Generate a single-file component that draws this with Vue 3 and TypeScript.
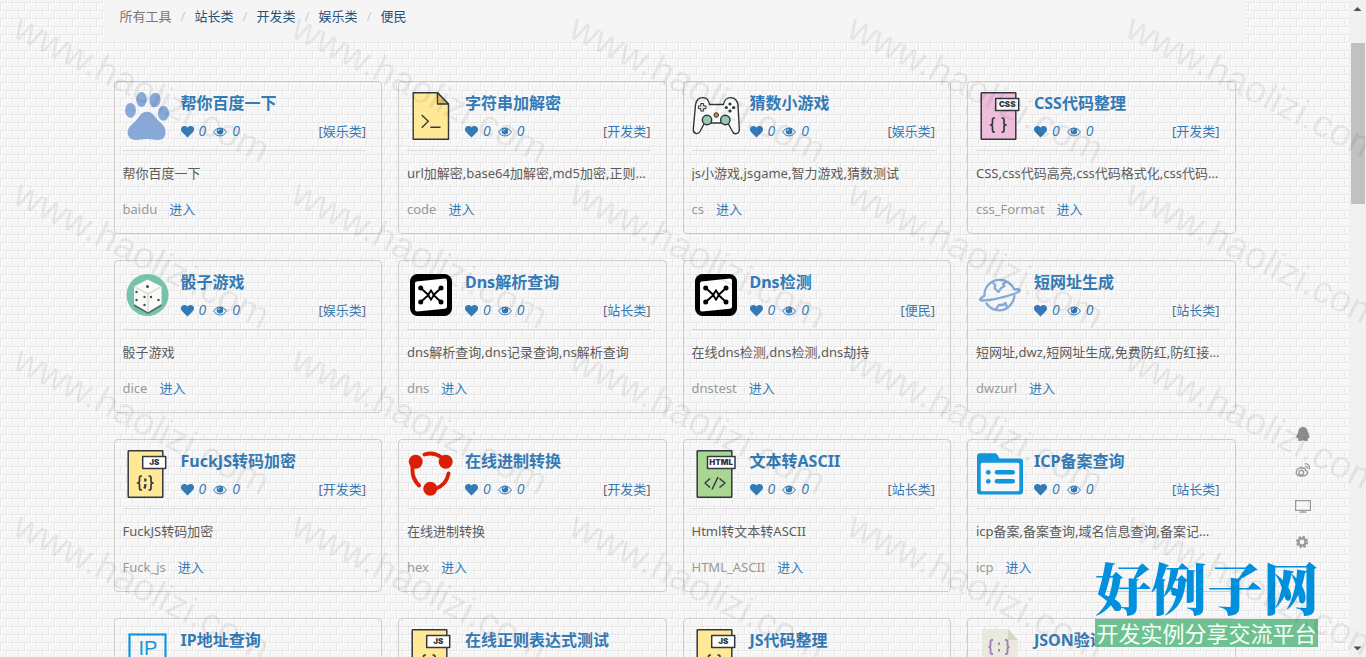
<script setup lang="ts">
interface Tool {
  title: string
  kind: string
  desc: string
  slug: string
  icon: string
}

const categories: string[] = ['站长类', '开发类', '娱乐类', '便民']

const tools: Tool[] = [
  { title: '帮你百度一下', kind: '娱乐类', desc: '帮你百度一下', slug: 'baidu', icon: 'paw' },
  { title: '字符串加解密', kind: '开发类', desc: 'url加解密,base64加解密,md5加密,正则表达式', slug: 'code', icon: 'shell' },
  { title: '猜数小游戏', kind: '娱乐类', desc: 'js小游戏,jsgame,智力游戏,猜数测试', slug: 'cs', icon: 'pad' },
  { title: 'CSS代码整理', kind: '开发类', desc: 'CSS,css代码高亮,css代码格式化,css代码整理', slug: 'css_Format', icon: 'css' },
  { title: '骰子游戏', kind: '娱乐类', desc: '骰子游戏', slug: 'dice', icon: 'dice' },
  { title: 'Dns解析查询', kind: '站长类', desc: 'dns解析查询,dns记录查询,ns解析查询', slug: 'dns', icon: 'dns' },
  { title: 'Dns检测', kind: '便民', desc: '在线dns检测,dns检测,dns劫持', slug: 'dnstest', icon: 'dns' },
  { title: '短网址生成', kind: '站长类', desc: '短网址,dwz,短网址生成,免费防红,防红接口生成', slug: 'dwzurl', icon: 'planet' },
  { title: 'FuckJS转码加密', kind: '开发类', desc: 'FuckJS转码加密', slug: 'Fuck_js', icon: 'js' },
  { title: '在线进制转换', kind: '开发类', desc: '在线进制转换', slug: 'hex', icon: 'share' },
  { title: '文本转ASCII', kind: '站长类', desc: 'Html转文本转ASCII', slug: 'HTML_ASCII', icon: 'html' },
  { title: 'ICP备案查询', kind: '站长类', desc: 'icp备案,备案查询,域名信息查询,备案记录查询', slug: 'icp', icon: 'folder' },
  { title: 'IP地址查询', kind: '站长类', desc: 'IP地址查询', slug: 'ip', icon: 'ip' },
  { title: '在线正则表达式测试', kind: '开发类', desc: '在线正则表达式测试', slug: 'regex', icon: 'js' },
  { title: 'JS代码整理', kind: '开发类', desc: 'JS代码整理', slug: 'js_Format', icon: 'js' },
  { title: 'JSON验证', kind: '开发类', desc: 'JSON验证', slug: 'json', icon: 'json' },
]

const marks: { x: number; y: number }[] = []
for (let row = 0; row < 4; row++) {
  for (let col = 0; col < 5; col++) marks.push({ x: 11 + col * 278, y: 36 + row * 166 })
}
</script>

<template>
  <div class="page">
    <main class="container">
      <nav class="crumbs" aria-label="工具分类">
        <span class="current">所有工具</span>
        <template v-for="c in categories" :key="c">
          <span class="slash">/</span><a href="#">{{ c }}</a>
        </template>
      </nav>

      <section class="grid">
        <article v-for="t in tools" :key="t.slug" class="card">
          <header class="head">
            <svg class="icon" viewBox="0 0 48 48" aria-hidden="true">
              <g v-if="t.icon === 'paw'" fill="#88a8d8">
                <ellipse cx="18.500" cy="7.500" rx="5.300" ry="7.500" />
                <ellipse cx="32" cy="8" rx="5.500" ry="7.300" transform="rotate(10 32 8)" />
                <ellipse cx="7.500" cy="18.300" rx="5.400" ry="7.400" />
                <ellipse cx="40.500" cy="21.300" rx="5.600" ry="7.400" />
                <path d="M24 19.700C17.500 19.700 16 26 11 30.500C6 35 4.700 37 4.700 40.500C4.700 45 8 48 12.500 48C17 48 20 47 24 47C28 47 31 48 35 48C39.500 48 42.500 45 42.500 40.500C42.500 37 42 34.500 37.500 30.500C32 26 30.500 19.700 24 19.700Z" />
              </g>
              <g v-else-if="t.icon === 'shell'" stroke="#333840" stroke-width="1.4" stroke-linejoin="round" fill="none">
                <path d="M6.200 .7H30.500L41.500 12V47.300H6.200Z" fill="#ffe997" />
                <path d="M30.500 .7V12H41.500Z" fill="#e5bf5a" />
                <path d="M14.700 23L21.300 29.300L14.700 35.700M23.300 35.200H33.500" />
              </g>
              <g v-else-if="t.icon === 'pad'" stroke="#30343a" stroke-width="1.4" fill="none" stroke-linejoin="round">
                <path d="M17.500 12.500H31.500C33 3 44.500 3.500 46 13L47.300 37C47.300 42.500 42 43 40.500 39.500L36 31H12.500L8 39.500C6 43 1 42 1.300 37L3.500 13C5 3.500 16 3 17.500 12.500Z" fill="#f9fbfa" />
                <path d="M8.800 11.500h2.800v2.400h2.400v2.800h-2.400v2.400H8.800v-2.400H6.400v-2.800h2.400Z" fill="#ddd" stroke-width="1" />
                <g fill="#30343a" stroke="none"><circle cx="38" cy="12" r="1.600" /><circle cx="34.300" cy="15.500" r="1.600" /><circle cx="41.600" cy="15.500" r="1.600" /><circle cx="38" cy="19" r="1.600" /></g>
                <circle cx="15" cy="28" r="4.700" fill="#9cc9ae" /><circle cx="33.300" cy="28" r="4.700" fill="#9cc9ae" />
                <circle cx="24.200" cy="23" r="2.300" fill="#c98d1d" stroke-width="1" />
              </g>
              <g v-else-if="t.icon === 'css' || t.icon === 'js' || t.icon === 'html'" stroke="#333840" stroke-width="1.500" fill="none" stroke-linejoin="round">
                <rect x="5.200" y=".8" width="34.600" height="46.400" rx=".5" :fill="t.icon === 'css' ? '#edbdda' : t.icon === 'js' ? '#ffe997' : '#aad694'" />
                <rect :x="t.icon === 'html' ? 15.500 : 19.700" y="6.500" :width="t.icon === 'html' ? 27.500 : 23" height="12" fill="#fff" />
                <text :x="t.icon === 'html' ? 29.200 : 31.200" y="15.300" class="tag">{{ t.icon.toUpperCase() }}</text>
                <path v-if="t.icon === 'html'" d="M18 28.500L13 33L18 37.500M27.500 28.500L33 33L27.500 37.500M26 27L20 39.500" />
                <path v-else d="M19 26H18Q16.500 26 16.500 28V31Q16.500 33 14.500 33Q16.500 33 16.500 35V38Q16.500 40 18 40H19M25.500 26H26.500Q28 26 28 28V31Q28 33 30 33Q28 33 28 35V38Q28 40 26.500 40H25.500" stroke-width="1.700" />
                <path v-if="t.icon === 'js'" d="M22.300 28.500V31.500M22.300 34V36L21.300 38.500" stroke-width="2.200" />
              </g>
              <g v-else-if="t.icon === 'dice'">
                <circle cx="24.500" cy="24" r="21" fill="#75c3ae" />
                <path d="M11 33L25 41.500L38.500 33V35L25 43L11 35Z" fill="#56635c" />
                <path d="M24.500 8.500L38.500 15.500V33L25 41L11 33V15.500Z" fill="#fbfaf6" />
                <path d="M11 15.500L25 23L38.500 15.500M25 23V41" fill="none" stroke="#d9d6c4" stroke-width="1.300" />
                <g fill="#3d4a55"><circle cx="24.500" cy="15.500" r="1.500" /><circle cx="13.500" cy="21" r="1.200" /><circle cx="13.500" cy="29" r="1.200" /><circle cx="21.500" cy="26" r="1.200" /><circle cx="21.500" cy="34" r="1.200" /><circle cx="28" cy="26" r="1.200" /><circle cx="35.500" cy="29" r="1.200" /></g>
              </g>
              <g v-else-if="t.icon === 'dns'">
                <rect x="3" y="3" width="42" height="42" rx="7.500" fill="#000" />
                <path d="M9.500 10.500L38 7.500Q40 7.500 40 9.500V35.500Q40 37.500 38 37.700L10 40.500Q8 40.500 8 38.500V12.500Q8 10.700 9.500 10.500Z" fill="#fff" />
                <g fill="none" stroke="#000" stroke-width="1.900"><path d="M13.700 17L21.500 24L13.700 31M34 17L26.500 24L34 31" /><path d="M24 19.500L27 24L24 28.500L21 24Z" /></g>
                <circle cx="13.700" cy="17" r="2.500" /><circle cx="34" cy="17" r="2.500" /><circle cx="13.700" cy="31" r="2.500" /><circle cx="34" cy="31" r="2.500" />
              </g>
              <g v-else-if="t.icon === 'planet'" fill="none" stroke="#86a9da" stroke-width="2.300" stroke-linecap="round" stroke-linejoin="round">
                <path d="M8.500 24.500C8 16 15 8.800 23.500 8.800C30 8.800 35.500 12.500 38 18M38.500 25C37 33.500 31 39.300 23.500 39.300C18 39.300 13.500 37 10.500 32.500" />
                <path d="M8 25C3.500 27.500 3 29.300 6 29.500C14 29.500 30 26 39 22.500C45 20 46 17.500 38.500 18.500" />
                <path d="M16 11L19.500 14L18.500 17L22.500 21L25 17L28.500 15L27 13L30 11M20 38L23 34L27 34L29.500 32L31 36" />
              </g>
              <g v-else-if="t.icon === 'share'" fill="#dc1e06">
                <circle cx="8.700" cy="11.700" r="7" /><circle cx="38.700" cy="11.700" r="7" /><circle cx="23.300" cy="38.700" r="7" />
                <path d="M17.500 4.500Q26 1.500 34 7M5.700 15Q4 28 12 35.500M41.500 23.500Q39.500 35 28 39" fill="none" stroke="#dc1e06" stroke-width="3.900" stroke-linecap="round" />
              </g>
              <g v-else-if="t.icon === 'folder'">
                <path d="M4 3.300H19Q20.500 3.300 21.500 5L23.500 8.500H44Q47 8.500 47 11.500V41.500Q47 44.500 44 44.500H4Q1 44.500 1 41.500V6.300Q1 3.300 4 3.300Z" fill="#1296db" />
                <rect x="4.700" y="12.700" width="38.600" height="28.500" rx="1.500" fill="#f7f7f7" />
                <g fill="#1296db"><circle cx="12.300" cy="22.300" r="2.400" /><circle cx="12.300" cy="31.300" r="2.400" /><rect x="18.700" y="20" width="20.300" height="4.600" rx="2.300" /><rect x="18.700" y="29" width="20.300" height="4.600" rx="2.300" /></g>
              </g>
              <g v-else-if="t.icon === 'ip'">
                <rect x="6.500" y="5.500" width="36" height="36" fill="none" stroke="#1296db" stroke-width="2.200" />
                <text x="25" y="26" class="ip">IP</text>
              </g>
              <g v-else>
                <path d="M6 0H32L42 11V48H6Z" fill="#e9e9e0" /><path d="M32 0L42 11H32Z" fill="#d7d7c8" />
                <path d="M17 11H16Q14.500 11 14.500 13V16Q14.500 18 12.500 18Q14.500 18 14.500 20V23Q14.500 25 16 25H17M29 11H30Q31.500 11 31.500 13V16Q31.500 18 33.500 18Q31.500 18 31.500 20V23Q31.500 25 30 25H29M23 13.500V16M23 20V22.500" fill="none" stroke="#a77fb5" stroke-width="1.900" />
              </g>
            </svg>
            <div class="info">
              <h3><a href="#">{{ t.title }}</a></h3>
              <div class="stats">
                <svg width="13" height="13" viewBox="0 0 13 13" aria-hidden="true"><path d="M6.500 12.500L1 7C-2.200 3.300 2.500-1.700 6.500 2.500C10.500-1.700 15.200 3.300 12 7Z" fill="#337ab7" /></svg>
                <i>0</i>
                <svg class="eye" width="14" height="13" viewBox="0 0 14 13" aria-hidden="true"><path d="M.6 7C3.800 1.700 10.200 1.700 13.400 7C10.200 12.200 3.800 12.200 .6 7Z" fill="none" stroke="#337ab7" /><circle cx="7" cy="6.200" r="3.200" fill="#337ab7" /><path d="M5.200 6Q5.200 4.400 7 4.400" fill="none" stroke="#fff" stroke-width=".7" /></svg>
                <i>0</i>
                <span class="kind">[<a href="#">{{ t.kind }}</a>]</span>
              </div>
            </div>
          </header>
          <p class="desc">{{ t.desc }}</p>
          <footer class="foot"><span>{{ t.slug }}</span><a href="#">进入</a></footer>
        </article>
      </section>
    </main>

    <svg class="watermark" aria-hidden="true">
      <text v-for="(m, i) in marks" :key="i" :transform="`translate(${m.x} ${m.y}) rotate(27)`">www.haolizi.com</text>
    </svg>

    <aside class="tools">
      <button type="button" aria-label="QQ"><svg viewBox="0 0 16 16"><path d="M8 1C4.800 1 3.300 3.400 3.300 6L2 9C.8 11.500 1.300 13 2.500 11.500L3.500 13L2.500 14.500Q5 15.500 8 14.300Q11 15.500 13.500 14.500L12.500 13L13.500 11.500C14.700 13 15.200 11.500 14 9L12.700 6C12.700 3.400 11.200 1 8 1Z" fill="#8c8c8c" /></svg></button>
      <button type="button" aria-label="微博"><svg viewBox="0 0 16 16" fill="none" stroke="#999" stroke-width="1.400"><path d="M6.500 5.500C4 5.500 1.200 8 1.200 10.500C1.200 15 12.500 15.500 12.500 10.500C12.500 9 11 8.500 10.300 8.300C11 6 9 5.500 7 6.500Z" /><circle cx="6.300" cy="10.700" r="2.300" /><path d="M9.500 2C13 1 15.500 4 14.300 7.500M10 4.300C11.800 4 12.800 5 12.300 6.800" stroke-width="1.200" /></svg></button>
      <button type="button" aria-label="电脑版"><svg viewBox="0 0 16 16"><rect x=".6" y="2.600" width="14.800" height="9.800" fill="none" stroke="#999" stroke-width="1.200" /><path d="M8 12.500V14M4.500 14.200H11.500" stroke="#999" stroke-width="1.200" /></svg></button>
      <button type="button" aria-label="设置"><svg viewBox="0 0 16 16"><circle cx="7" cy="8" r="3.600" fill="none" stroke="#999" stroke-width="2.400" /><circle cx="7" cy="8" r="5.200" fill="none" stroke="#999" stroke-width="2" stroke-dasharray="2.300 1.784" /></svg></button>
    </aside>

    <div class="brand">
      <strong>好例子网</strong>
      <span>开发实例分享交流平台</span>
    </div>

    <div class="scroll" aria-hidden="true">
      <svg viewBox="0 0 17 17"><path d="M4.500 11L8.500 7L12.500 11Z" fill="#505050" /></svg>
      <div class="track"><div class="thumb"></div></div>
      <svg viewBox="0 0 17 17"><path d="M4.500 6.500L8.500 10.500L12.500 6.500Z" fill="#505050" /></svg>
    </div>
  </div>
</template>

<style>
body {
  margin: 0;
}
</style>

<style scoped>
* {
  box-sizing: border-box;
}

.page {
  position: relative;
  height: 100vh;
  padding-right: 17px;
  overflow: hidden;
  background: #f6f6f6
    url("data:image/svg+xml,%3Csvg xmlns='http://www.w3.org/2000/svg' width='12' height='16'%3E%3Crect width='12' height='16' fill='%23f6f6f6'/%3E%3Cpath d='M0 3.500H12M0 11.500H12M1.500 3V10M7.500 11V16M7.500 0V2' stroke='%23fff'/%3E%3Cpath d='M0 2.500H12M0 10.500H12M.5 3V10M6.500 11V16M6.500 0V2' stroke='%23e7e7e7'/%3E%3C/svg%3E");
  color: #5c5c5c;
  font: 13px/20px "Noto Sans", "Noto Sans CJK SC", sans-serif;
}

a {
  color: #337ab7;
  text-decoration: none;
}

.container {
  max-width: 1170px;
  margin: 0 auto;
  padding: 0 15px;
}

.crumbs {
  display: flex;
  height: 41px;
  padding: 6px 15px;
  background: #f5f5f5;
}

.crumbs a {
  color: #23527c;
}

.current {
  color: #777;
}

.slash {
  width: 23px;
  color: #ccc;
  text-align: center;
}

.grid {
  display: grid;
  grid-template-columns: repeat(4, minmax(0, 1fr));
  gap: 26px 16px;
  padding: 40px 9px 0;
}

.card {
  padding: 10px 15px 14px 8px;
  border: 1px solid #ccc;
  border-radius: 4px;
}

.head {
  display: flex;
  gap: 10px;
  height: 59px;
  border-bottom: 1px solid #ddd;
}

.icon {
  flex: none;
  width: 48px;
  height: 48px;
}

.tag {
  fill: #333840;
  stroke: none;
  font: 900 8px Inter, sans-serif;
  text-anchor: middle;
}

.ip {
  fill: #1296db;
  font: 20px "Liberation Sans", sans-serif;
  text-anchor: middle;
}

.info {
  flex: 1;
  min-width: 0;
}

h3 {
  margin: 0 0 7px;
  font-size: 16px;
  line-height: 22px;
}

.stats {
  display: flex;
  align-items: center;
  gap: 5px;
  color: #337ab7;
}

.stats i {
  font-family: "Open Sans", sans-serif;
  font-size: 14px;
}

.eye {
  margin-left: 2px;
}

.kind {
  margin-left: auto;
  color: #667;
}

.desc {
  margin: 12px -1px 16px 0;
  overflow: hidden;
  text-overflow: ellipsis;
  white-space: nowrap;
}

.foot {
  display: flex;
  gap: 12px;
  color: #999;
}

.watermark {
  position: absolute;
  inset: 0;
  width: 100%;
  height: 100%;
  z-index: 2;
  fill: rgba(0, 0, 0, 0.08);
  font: 38px "Liberation Sans", sans-serif;
  pointer-events: none;
}

.tools {
  position: absolute;
  right: 55px;
  bottom: 107px;
  display: grid;
  gap: 20px;
}

.tools button {
  width: 16px;
  height: 16px;
  padding: 0;
  border: 0;
  background: none;
}

.tools svg {
  display: block;
}

.brand {
  position: absolute;
  right: 48px;
  bottom: 10px;
  z-index: 1;
  display: grid;
  grid-template-columns: 100%;
  width: 223px;
  white-space: nowrap;
}

.brand strong {
  padding-bottom: 2px;
  color: #0090de;
  font: 900 56px/62px "Noto Serif CJK SC", "Noto Sans CJK SC", sans-serif;
}

.brand span {
  background: #6fc191;
  color: #f5fff8;
  font-size: 22px;
  line-height: 28px;
  text-align: center;
}

.scroll {
  position: absolute;
  inset: 0 0 0 auto;
  display: flex;
  flex-direction: column;
  width: 17px;
  background: #f1f1f1;
}

.scroll svg {
  height: 17px;
}

.track {
  flex: 1;
  padding: 26px 1px 0 2px;
}

.thumb {
  height: 161px;
  background: #c1c1c1;
}
</style>
